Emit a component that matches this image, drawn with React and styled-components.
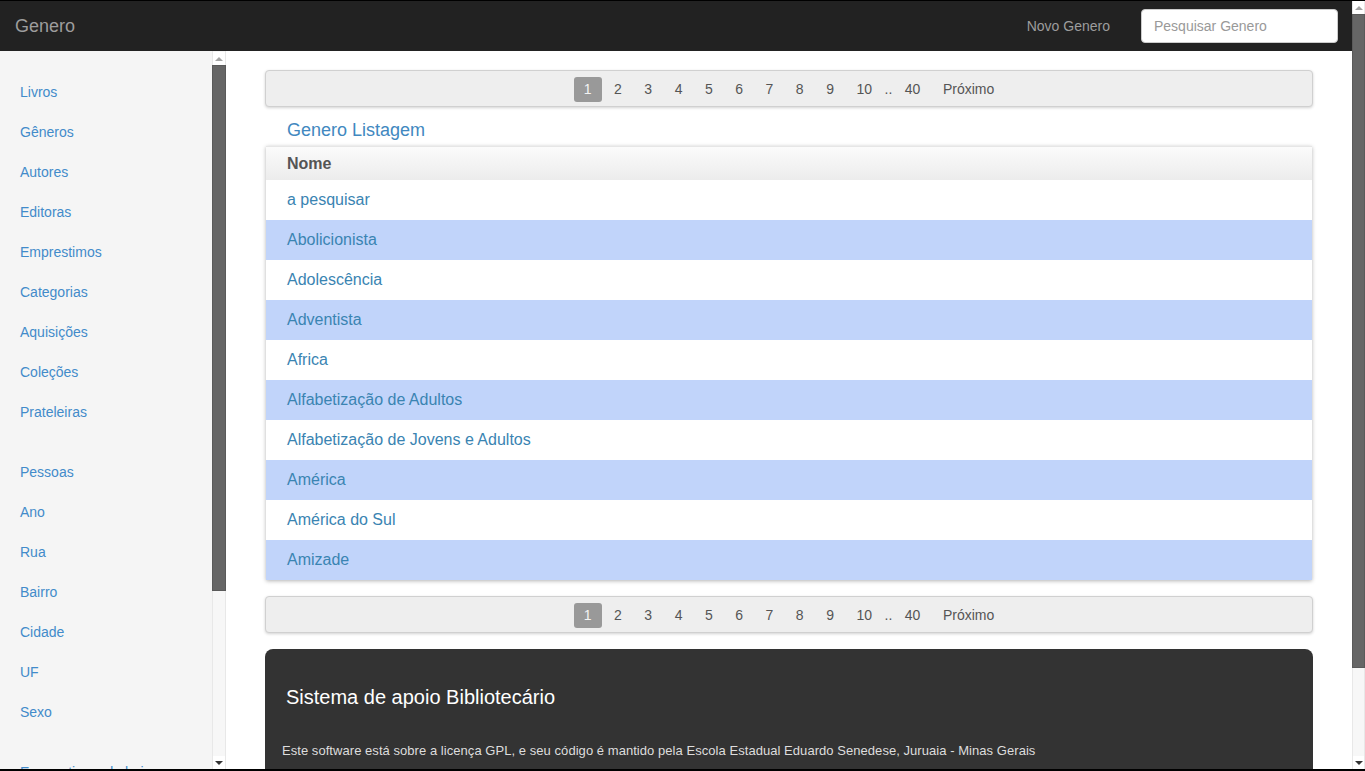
import React from "react";
import styled, { createGlobalStyle } from "styled-components";

const Global = createGlobalStyle`
  html, body { margin: 0; padding: 0; }
  body {
    font-family: "Liberation Sans", Arial, sans-serif;
    font-size: 14px;
    color: #333;
    background: #fff;
  }
  * { box-sizing: border-box; }
`;

const Root = styled.div`
  height: 100vh;
  display: flex;
  flex-direction: column;
  border-top: 1px solid #000;
  border-bottom: 2px solid #000;
  overflow: hidden;
`;

const Frame = styled.div`
  flex: 1;
  min-height: 0;
  display: flex;
`;

const Viewport = styled.div`
  flex: 1;
  min-width: 0;
  display: flex;
  flex-direction: column;
`;

const Navbar = styled.header`
  height: 50px;
  flex: none;
  background: #222;
  display: flex;
  align-items: center;
  padding: 0 14px 0 15px;
`;

const Brand = styled.a`
  color: #9d9d9d;
  font-size: 18px;
  line-height: 20px;
  text-decoration: none;
`;

const NavRight = styled.div`
  margin-left: auto;
  display: flex;
  align-items: center;
`;

const NavLink = styled.a`
  color: #9d9d9d;
  font-size: 14px;
  text-decoration: none;
  margin-right: 31px;
`;

const Search = styled.input`
  width: 197px;
  height: 34px;
  border: 1px solid #ccc;
  border-radius: 4px;
  padding: 6px 12px;
  font-family: inherit;
  font-size: 14px;
  color: #555;
  background: #fff;
  &::placeholder { color: #999; }
`;

const Body = styled.div`
  flex: 1;
  min-height: 0;
  display: flex;
`;

const SideArea = styled.aside`
  width: 226px;
  flex: none;
  display: flex;
  background: #f5f5f5;
`;

const SideNav = styled.nav`
  width: 212px;
  flex: none;
  overflow: hidden;
  padding-top: 21px;
`;

const NavGroup = styled.ul`
  list-style: none;
  margin: 0 0 20px;
  padding: 0;
`;

const SideLink = styled.a`
  display: block;
  padding: 10px 20px;
  line-height: 20px;
  color: #428bca;
  text-decoration: none;
  white-space: nowrap;
`;

const Bar = styled.div`
  width: ${(p) => p.$w}px;
  flex: none;
  display: flex;
  flex-direction: column;
  background: #f7f7f7;
  border-left: 1px solid #e8e8e8;
  border-right: 1px solid #e8e8e8;
  padding-top: ${(p) => p.$top}px;
`;

const BarButton = styled.div`
  height: 13px;
  flex: none;
  background: #fff;
  display: flex;
  align-items: center;
  justify-content: center;
  &::after {
    content: "";
    width: 0;
    height: 0;
    border-left: 4px solid transparent;
    border-right: 4px solid transparent;
    ${(p) =>
      p.$down
        ? "border-top: 4px solid #333;"
        : "border-bottom: 4px solid #a3a3a3;"}
  }
`;

const Thumb = styled.div`
  flex: none;
  background: #666;
  margin: 0 -1px;
  border: 1px solid #5a5a5a;
`;

const Track = styled.div`
  flex: 1;
`;

function Scrollbar({ width, top, thumb }) {
  return (
    <Bar $w={width} $top={top}>
      <BarButton />
      <Thumb style={{ height: thumb }} />
      <Track />
      <BarButton $down />
    </Bar>
  );
}

const Main = styled.main`
  flex: 1;
  min-width: 0;
  overflow: hidden;
  padding: 19px 39px 0;
  background: #fff;
`;

const Pager = styled.nav`
  height: 37px;
  padding-top: 1px;
  background: #eee;
  border: 1px solid #d0d0d0;
  border-radius: 4px;
  box-shadow: 0 1px 3px rgba(0, 0, 0, 0.18);
  display: flex;
  align-items: center;
  justify-content: center;
  gap: 2.5px;
  margin: ${(p) => p.$m};
`;

const PageLink = styled.a`
  height: 25px;
  line-height: 25px;
  padding: 0 10px;
  border-radius: 3px;
  color: ${(p) => (p.$active ? "#f3f3f3" : "#555")};
  background: ${(p) => (p.$active ? "#999" : "transparent")};
  text-decoration: none;
`;

const Dots = styled.span`
  color: #555;
  line-height: 25px;
`;

const Title = styled.h4`
  margin: 12px 0 5px 22px;
  font-size: 18px;
  font-weight: normal;
  line-height: 22px;
  color: #4188c0;
`;

const Table = styled.div`
  margin: 0 1px;
  box-shadow: 0 1px 4px rgba(0, 0, 0, 0.3);
  border-top: 1px solid #e6e6e6;
`;

const HeadRow = styled.div`
  height: 33px;
  display: flex;
  align-items: center;
  padding-left: 21px;
  font-size: 16px;
  font-weight: bold;
  color: #555;
  background: linear-gradient(#fbfbfb, #ececec);
`;

const Row = styled.div`
  height: 40px;
  display: flex;
  align-items: center;
  padding-left: 21px;
  font-size: 16px;
  color: #3a84b2;
  background: ${(p) => (p.$alt ? "#c1d4fa" : "#fff")};
`;

const Footer = styled.footer`
  margin-top: 16px;
  background: #333;
  border-radius: 8px 8px 0 0;
  padding: 36px 21px 0;
  height: 140px;
`;

const FooterTitle = styled.h3`
  margin: 0;
  font-size: 20px;
  font-weight: normal;
  line-height: 24px;
  color: #fff;
`;

const FooterText = styled.p`
  margin: 34px 0 0 -4px;
  font-size: 13px;
  letter-spacing: 0.05px;
  color: #ddd;
`;

const groups = [
  ["Livros", "Gêneros", "Autores", "Editoras", "Emprestimos", "Categorias", "Aquisições", "Coleções", "Prateleiras"],
  ["Pessoas", "Ano", "Rua", "Bairro", "Cidade", "UF", "Sexo"],
  ["Emprestimos de hoje", "Devoluções"],
];

const rows = [
  "a pesquisar",
  "Abolicionista",
  "Adolescência",
  "Adventista",
  "Africa",
  "Alfabetização de Adultos",
  "Alfabetização de Jovens e Adultos",
  "América",
  "América do Sul",
  "Amizade",
];

function Pagination({ m }) {
  return (
    <Pager $m={m}>
      {["1", "2", "3", "4", "5", "6", "7", "8", "9", "10"].map((n) => (
        <PageLink key={n} href="#" $active={n === "1"}>
          {n}
        </PageLink>
      ))}
      <Dots>..</Dots>
      <PageLink href="#">40</PageLink>
      <PageLink href="#">Próximo</PageLink>
    </Pager>
  );
}

export default function App() {
  return (
    <>
      <Global />
      <Root>
        <Frame>
          <Viewport>
            <Navbar>
              <Brand href="#">Genero</Brand>
              <NavRight>
                <NavLink href="#">Novo Genero</NavLink>
                <Search placeholder="Pesquisar Genero" />
              </NavRight>
            </Navbar>
            <Body>
              <SideArea>
                <SideNav>
                  {groups.map((g, i) => (
                    <NavGroup key={i}>
                      {g.map((item) => (
                        <li key={item}>
                          <SideLink href="#">{item}</SideLink>
                        </li>
                      ))}
                    </NavGroup>
                  ))}
                </SideNav>
                <Scrollbar width={14} top={1} thumb={526} />
              </SideArea>
              <Main>
                <Pagination m="0" />
                <Title>Genero Listagem</Title>
                <Table>
                  <HeadRow>Nome</HeadRow>
                  {rows.map((r, i) => (
                    <Row key={r} $alt={i % 2 === 1}>
                      {r}
                    </Row>
                  ))}
                </Table>
                <Pagination m="16px 0 0" />
                <Footer>
                  <FooterTitle>Sistema de apoio Bibliotecário</FooterTitle>
                  <FooterText>
                    Este software está sobre a licença GPL, e seu código é mantido pela Escola Estadual Eduardo Senedese, Juruaia - Minas Gerais
                  </FooterText>
                </Footer>
              </Main>
            </Body>
          </Viewport>
          <Scrollbar width={13} top={0} thumb={654} />
        </Frame>
      </Root>
    </>
  );
}
